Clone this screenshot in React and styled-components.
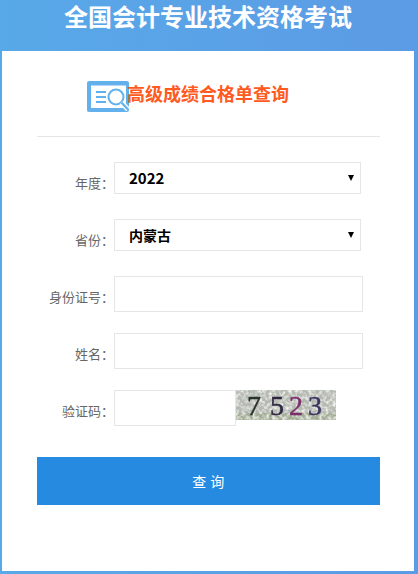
import styled, { createGlobalStyle } from 'styled-components';

const GlobalStyle = createGlobalStyle`
    html, body {
        margin: 0;
        padding: 0;
    }
    body {
        font-family: "Noto Sans CJK SC", "Noto Sans", sans-serif;
    }
    * {
        box-sizing: border-box;
    }
`;

export default function App() {
    return (
        <Page>
            <GlobalStyle />
            <Title>全国会计专业技术资格考试</Title>
            <Card>
                <Heading>
                    <ReportIcon />
                    <h2>高级成绩合格单查询</h2>
                </Heading>
                <Form onSubmit={(e) => e.preventDefault()}>
                    <Row>
                        <Label>年度：</Label>
                        <SelectBox>
                            <Select $size={15} defaultValue="2022">
                                <option value="2022">2022</option>
                                <option value="2021">2021</option>
                            </Select>
                        </SelectBox>
                    </Row>
                    <Row>
                        <Label>省份：</Label>
                        <SelectBox>
                            <Select $size={14} defaultValue="内蒙古">
                                <option value="内蒙古">内蒙古</option>
                                <option value="北京">北京</option>
                            </Select>
                        </SelectBox>
                    </Row>
                    <Row>
                        <Label>身份证号：</Label>
                        <Input />
                    </Row>
                    <Row>
                        <Label>姓名：</Label>
                        <Input />
                    </Row>
                    <Row>
                        <Label>验证码：</Label>
                        <Input $width={122} />
                        <Captcha />
                    </Row>
                    <Submit type="submit">查 询</Submit>
                </Form>
            </Card>
        </Page>
    );
}

function ReportIcon() {
    return (
        <svg width="43" height="32" viewBox="0 0 43 32" fill="none">
            <rect width="42" height="31" rx="2" fill="#62b1ec" />
            <rect x="4" y="4.5" width="35" height="22.5" fill="#fff" />
            <path d="M9 11h10M9 16h10M9 21h10" stroke="#62b1ec" strokeWidth="2.2" />
            <circle cx="29" cy="16" r="7.5" fill="#fff" stroke="#62b1ec" strokeWidth="2" />
            <path d="M34.5 21.5l6.5 7" stroke="#fff" strokeWidth="5" />
            <path d="M34.5 21.5l6.5 7" stroke="#62b1ec" strokeWidth="2.2" />
        </svg>
    );
}

function Captcha() {
    return (
        <CaptchaImage width="100" height="30" viewBox="0 0 100 30">
            <filter id="speckle" x="0" y="0" width="100%" height="100%">
                <feTurbulence type="fractalNoise" baseFrequency="0.3" numOctaves="2" seed="7" />
                <feColorMatrix values="0 0 0 0 0.9  0 0 0 0 0.91  0 0 0 0 0.89  2.4 0 0 0 -0.95" />
                <feGaussianBlur stdDeviation="0.35" />
            </filter>
            <filter id="soften">
                <feGaussianBlur stdDeviation="0.4" />
            </filter>
            <rect width="100" height="30" fill="#b4b9b1" />
            <rect y="23" width="100" height="7" fill="#a3ad96" />
            <rect width="100" height="30" filter="url(#speckle)" />
            <g filter="url(#soften)">
                <CaptchaDigit x="11" y="25" fill="#27322a" stroke="#27322a">7</CaptchaDigit>
                <CaptchaDigit x="34" y="25" fill="#2f2840" stroke="#2f2840">5</CaptchaDigit>
                <CaptchaDigit x="53" y="25" fill="#7a2f6c" stroke="#7a2f6c">2</CaptchaDigit>
                <CaptchaDigit x="72" y="25" fill="#3c3560" stroke="#3c3560">3</CaptchaDigit>
            </g>
        </CaptchaImage>
    );
}

const Page = styled.div`
    width: 418px;
    height: 574px;
    padding: 0 4px 3px 2px;
    background: linear-gradient(90deg, #58a9e8, #5c9be5);
    display: flex;
    flex-direction: column;
    overflow: hidden;
`;

const Title = styled.h1`
    margin: 0;
    height: 51px;
    font-size: 24px;
    line-height: 32px;
    font-weight: 700;
    color: #fff;
    text-align: center;
`;

const Card = styled.main`
    flex: 1;
    background: #fff;
    padding: 0 34px 0 35px;
`;

const Heading = styled.div`
    height: 85px;
    padding-top: 30px;
    display: flex;
    align-items: flex-start;
    margin-left: 50px;

    h2 {
        margin: -1px 0 0 -3px;
        font-size: 18px;
        line-height: 26px;
        font-weight: 700;
        color: #ff5a22;
    }
`;

const Form = styled.form`
    border-top: 1px solid #e6e6e6;
    padding-top: 25px;
    display: flex;
    flex-direction: column;
`;

const Row = styled.div`
    display: flex;
    align-items: flex-start;
    margin-bottom: 21px;

    &:nth-child(-n+2) {
        margin-bottom: 25px;
    }
`;

const Label = styled.label`
    width: 77px;
    font-size: 13px;
    line-height: 18px;
    padding-top: 12px;
    color: #666;
    text-align: right;
    white-space: nowrap;
`;

const SelectBox = styled.div`
    position: relative;
    width: 247px;
    height: 32px;

    &::after {
        content: '';
        position: absolute;
        right: 7px;
        top: 13px;
        border-left: 3px solid transparent;
        border-right: 3px solid transparent;
        border-top: 6px solid #000;
        pointer-events: none;
    }
`;

const Select = styled.select`
    appearance: none;
    width: 100%;
    height: 100%;
    padding: 0 0 ${(props) => (props.$size > 14 ? 2 : 0)}px 14px;
    border: 1px solid #e6e6e6;
    border-radius: 0;
    background: #fff;
    color: #000;
    font-family: inherit;
    font-size: ${(props) => props.$size}px;
    font-weight: 700;
`;

const Input = styled.input`
    width: ${(props) => props.$width || 249}px;
    height: 36px;
    border: 1px solid #e6e6e6;
    background: #fff;
    padding: 0 8px;
`;

const CaptchaImage = styled.svg`
    flex: none;
`;

const CaptchaDigit = styled.text`
    font-family: "Liberation Serif", serif;
    font-size: 28px;
    stroke-width: 0.5;
`;

const Submit = styled.button`
    height: 48px;
    margin-top: 10px;
    border: none;
    background: #268ae0;
    color: #fff;
    font-family: inherit;
    font-size: 14px;
    letter-spacing: 0.5px;
`;
